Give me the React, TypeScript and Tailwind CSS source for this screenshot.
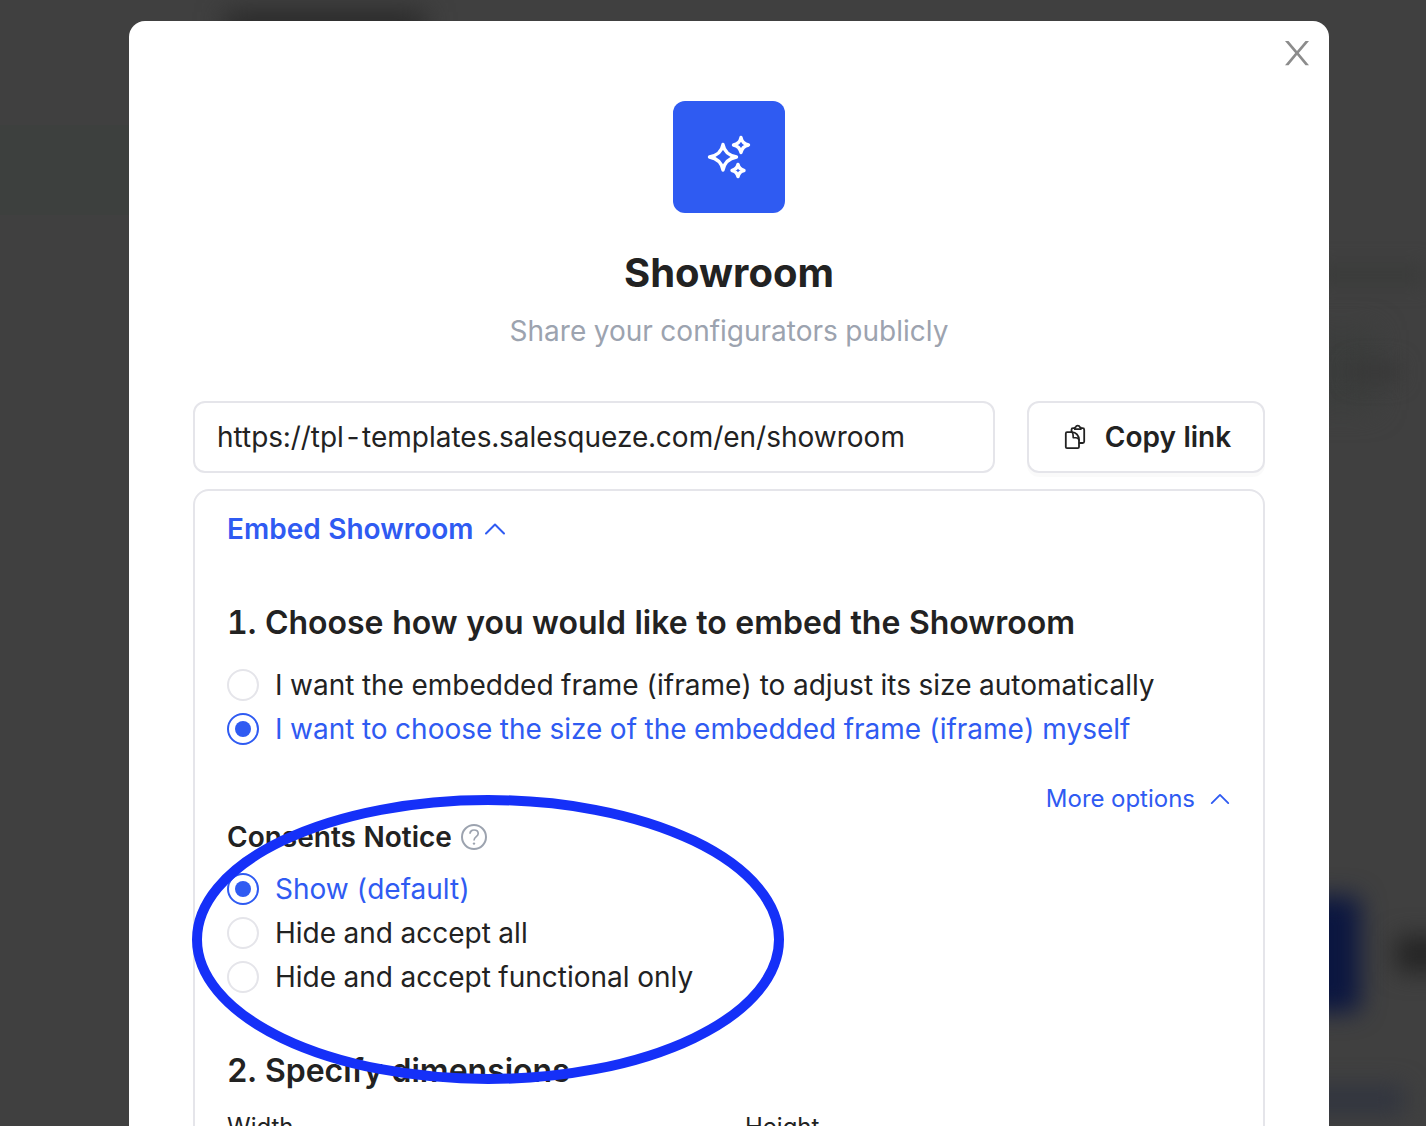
import { useState } from 'react';

const embedOptions = [
    { value: "auto", label: "I want the embedded frame (iframe) to adjust its size automatically" },
    { value: "manual", label: "I want to choose the size of the embedded frame (iframe) myself" },
];

const consentOptions = [
    { value: "show", label: "Show (default)" },
    { value: "hide-all", label: "Hide and accept all" },
    { value: "hide-functional", label: "Hide and accept functional only" },
];

function SparklesIcon() {
    return (
        <svg width="48" height="48" viewBox="0 0 48 48" fill="none" stroke="white" strokeWidth="3.4" strokeLinejoin="round" aria-hidden="true">
            <path d="M18 11.5C19.2 18.5 23.5 22.5 31.5 24C23.5 25.5 19.2 29.8 18 37C16.8 29.8 12.5 25.5 4.5 24C12.5 22.5 16.8 18.5 18 11.5Z" />
            <path d="M36 4.5C36.8 8.5 39 11 43.5 12C39 13 36.8 15.5 36 19.5C35.2 15.5 33 13 28.5 12C33 11 35.2 8.5 36 4.5Z" />
            <path d="M33 31.5C33.7 34.5 35.5 36.7 39 37.5C35.5 38.3 33.7 40.5 33 43.5C32.3 40.5 30.5 38.3 27 37.5C30.5 36.7 32.3 34.5 33 31.5Z" />
        </svg>
    );
}

function CopyIcon() {
    return (
        <svg width="28" height="28" viewBox="0 0 28 28" fill="none" stroke="currentColor" strokeWidth="1.8" strokeLinejoin="round" strokeLinecap="round" aria-hidden="true">
            <path d="M13.5 5.2H12A1.500 1.500 0 0 0 10.500 6.700V9" />
            <path d="M20 5.200H21.700A1.500 1.500 0 0 1 23.200 6.700V18.500A1.500 1.500 0 0 1 21.700 20H18.500" />
            <path d="M13.800 6.200V5.200A1 1 0 0 1 14.600 4.200A2.300 2.300 0 0 1 18.900 4.200A1 1 0 0 1 19.800 5.200V6.200Z" />
            <path d="M11 9.200H6A1.200 1.200 0 0 0 4.800 10.400V23.900A1.200 1.200 0 0 0 6 25.100H16.800A1.200 1.200 0 0 0 18 23.900V17C18 12.500 15 9.200 11 9.200Z" />
            <path d="M11 9.200C12.300 10.200 12.200 12 12.200 14.700H15C16.800 14.700 17.600 15.600 18 17" strokeWidth="1.600" />
        </svg>
    );
}

function ChevronUp({ size }) {
    return (
        <svg width={size} height={size} viewBox="0 0 24 24" fill="none" stroke="currentColor" strokeWidth="2" strokeLinecap="round" strokeLinejoin="round" aria-hidden="true">
            <path d="M3 16.500L12 7.500L21 16.500" />
        </svg>
    );
}

function HelpIcon() {
    return (
        <svg width="28" height="28" viewBox="0 0 28 28" fill="none" stroke="#9ca3af" strokeWidth="2" aria-hidden="true">
            <circle cx="14" cy="14" r="12" />
            <path d="M10 10.800C10 8.400 11.800 7 14 7C16.400 7 18.200 8.500 18.200 10.600C18.200 13.700 14 13.700 14 17.400" strokeWidth="1.700" />
            <circle cx="14" cy="20.600" r="1.200" fill="#9ca3af" stroke="none" />
        </svg>
    );
}

function RadioList({ name, options, value, onChange }) {
    return (
        <div className="flex flex-col">
            {options.map((option) => (
                <label key={option.value} className="flex items-center gap-4 text-[28px] leading-[44px] cursor-pointer has-checked:text-[#2f5bf2]">
                    <input
                        type="radio"
                        name={name}
                        value={option.value}
                        checked={value === option.value}
                        onChange={() => onChange(option.value)}
                        className="flex size-8 shrink-0 appearance-none items-center justify-center rounded-full border-2 border-[#e5e5ea] bg-white checked:border-[#2f5bf2] checked:before:size-4 checked:before:rounded-full checked:before:bg-[#2f5bf2] checked:before:content-['']"
                    />
                    <span>{option.label}</span>
                </label>
            ))}
        </div>
    );
}

// Dimmed page content that shows around the dialog
function Backdrop() {
    return (
        <div className="absolute inset-0 bg-[#404040]" aria-hidden="true">
            <div className="absolute top-[125px] left-0 h-[90px] w-[130px] bg-[#3d403e]" />
            <div className="absolute top-3 left-[225px] h-8 w-[200px] bg-[#282828] blur-[14px]" />
            <div className="absolute top-[265px] right-0 h-5 w-[110px] bg-[#3a3b3a] blur-[10px]" />
            <div className="absolute top-[330px] right-[50px] h-20 w-[70px] bg-[#3b3d3c] blur-[14px]" />
            <div className="absolute top-[362px] right-[26px] h-5 w-[50px] bg-[#383838] blur-[10px]" />
            <div className="absolute top-[896px] right-[66px] h-[116px] w-28 rounded-lg bg-[#0b1640] blur-[12px]" />
            <div className="absolute top-[936px] -right-5 h-9 w-[50px] bg-[#242424] blur-[12px]" />
            <div className="absolute top-[1086px] right-[22px] h-7 w-32 bg-[#30343f] blur-[12px]" />
        </div>
    );
}

export default function App() {
    const [url, setUrl] = useState("https://tpl-templates.salesqueze.com/en/showroom");
    const [embed, setEmbed] = useState("manual");
    const [consent, setConsent] = useState("show");

    return (
        <div className="relative h-screen overflow-hidden font-['Inter',sans-serif] text-[#222222] tabular-nums">
            <Backdrop />

            <div className="relative flex justify-center pt-[21px] pl-8">
                <div role="dialog" aria-labelledby="dialog-title" className="relative w-full max-w-[1200px] rounded-2xl bg-white px-16 pt-20 pb-16">
                    <button type="button" aria-label="Close" className="absolute top-4 right-4 flex size-8 items-center justify-center text-[#8c8c8c]">
                        <svg width="32" height="32" viewBox="0 0 32 32" fill="currentColor" aria-hidden="true">
                            <path d="M4 4H7.500L16 14L24.500 4H28L17.800 16L28 28.300H24.500L16 18.100L7.500 28.300H4L14.200 16Z" />
                        </svg>
                    </button>

                    {/* Header */}
                    <div className="flex flex-col items-center text-center">
                        <div className="flex size-28 items-center justify-center rounded-xl bg-[#2f5bf2]">
                            <SparklesIcon />
                        </div>
                        <h1 id="dialog-title" className="mt-9 text-[40px] leading-[48px] font-bold">Showroom</h1>
                        <p className="mt-3 text-[28px] leading-[44px] text-[#9ca3af]">Share your configurators publicly</p>
                    </div>

                    {/* Public link */}
                    <div className="mt-12 flex gap-8">
                        <input
                            type="text"
                            aria-label="Showroom link"
                            value={url}
                            onChange={(event) => setUrl(event.target.value)}
                            className="h-[72px] min-w-0 flex-1 rounded-xl border-2 border-[#e5e5ea] px-[22px] text-[28px] tabular-nums"
                        />
                        <button type="button" className="flex h-[72px] w-[238px] items-center justify-center gap-4 rounded-xl border-2 border-[#e5e5ea] bg-white text-[28px] font-semibold shadow-[0_4px_0_rgba(0,0,0,0.02)]">
                            <CopyIcon />
                            Copy link
                        </button>
                    </div>

                    {/* Embed settings */}
                    <section className="mt-4 rounded-2xl border-2 border-[#e5e5ea] px-8 pt-4 pb-8">
                        <button type="button" className="flex items-center gap-2.5 text-[28px] leading-[44px] font-semibold text-[#2f5bf2]">
                            Embed Showroom
                            <ChevronUp size={24} />
                        </button>

                        <h2 className="mt-12 mb-4 text-[32px] leading-[48px] font-semibold">1. Choose how you would like to embed the Showroom</h2>
                        <RadioList name="embed" options={embedOptions} value={embed} onChange={setEmbed} />

                        <div className="mt-8 flex justify-end">
                            <button type="button" className="flex items-center gap-3.5 text-2xl leading-8 text-[#2f5bf2]">
                                More options
                                <ChevronUp size={22} />
                            </button>
                        </div>

                        <div className="relative">
                            <h3 className="mb-2 flex items-center gap-2 text-[28px] leading-[44px] font-semibold">
                                Consents Notice
                                <HelpIcon />
                            </h3>
                            <RadioList name="consent" options={consentOptions} value={consent} onChange={setConsent} />
                            <svg className="pointer-events-none absolute -top-5 -left-[35px]" width="592" height="290" viewBox="0 0 592 290" fill="none" aria-hidden="true">
                                <ellipse cx="296" cy="144.500" rx="291" ry="139.500" stroke="#1530f8" strokeWidth="10" />
                            </svg>
                        </div>

                        <h2 className="mt-12 mb-4 text-[32px] leading-[48px] font-semibold">2. Specify dimensions</h2>
                        <div className="grid grid-cols-2 gap-8">
                            <label className="flex flex-col gap-2 text-2xl leading-8">
                                Width
                                <input type="text" defaultValue="100%" className="h-[72px] rounded-xl border-2 border-[#e5e5ea] px-[22px] text-[28px]" />
                            </label>
                            <label className="flex flex-col gap-2 text-2xl leading-8">
                                Height
                                <input type="text" defaultValue="800px" className="h-[72px] rounded-xl border-2 border-[#e5e5ea] px-[22px] text-[28px]" />
                            </label>
                        </div>
                    </section>
                </div>
            </div>
        </div>
    );
}
